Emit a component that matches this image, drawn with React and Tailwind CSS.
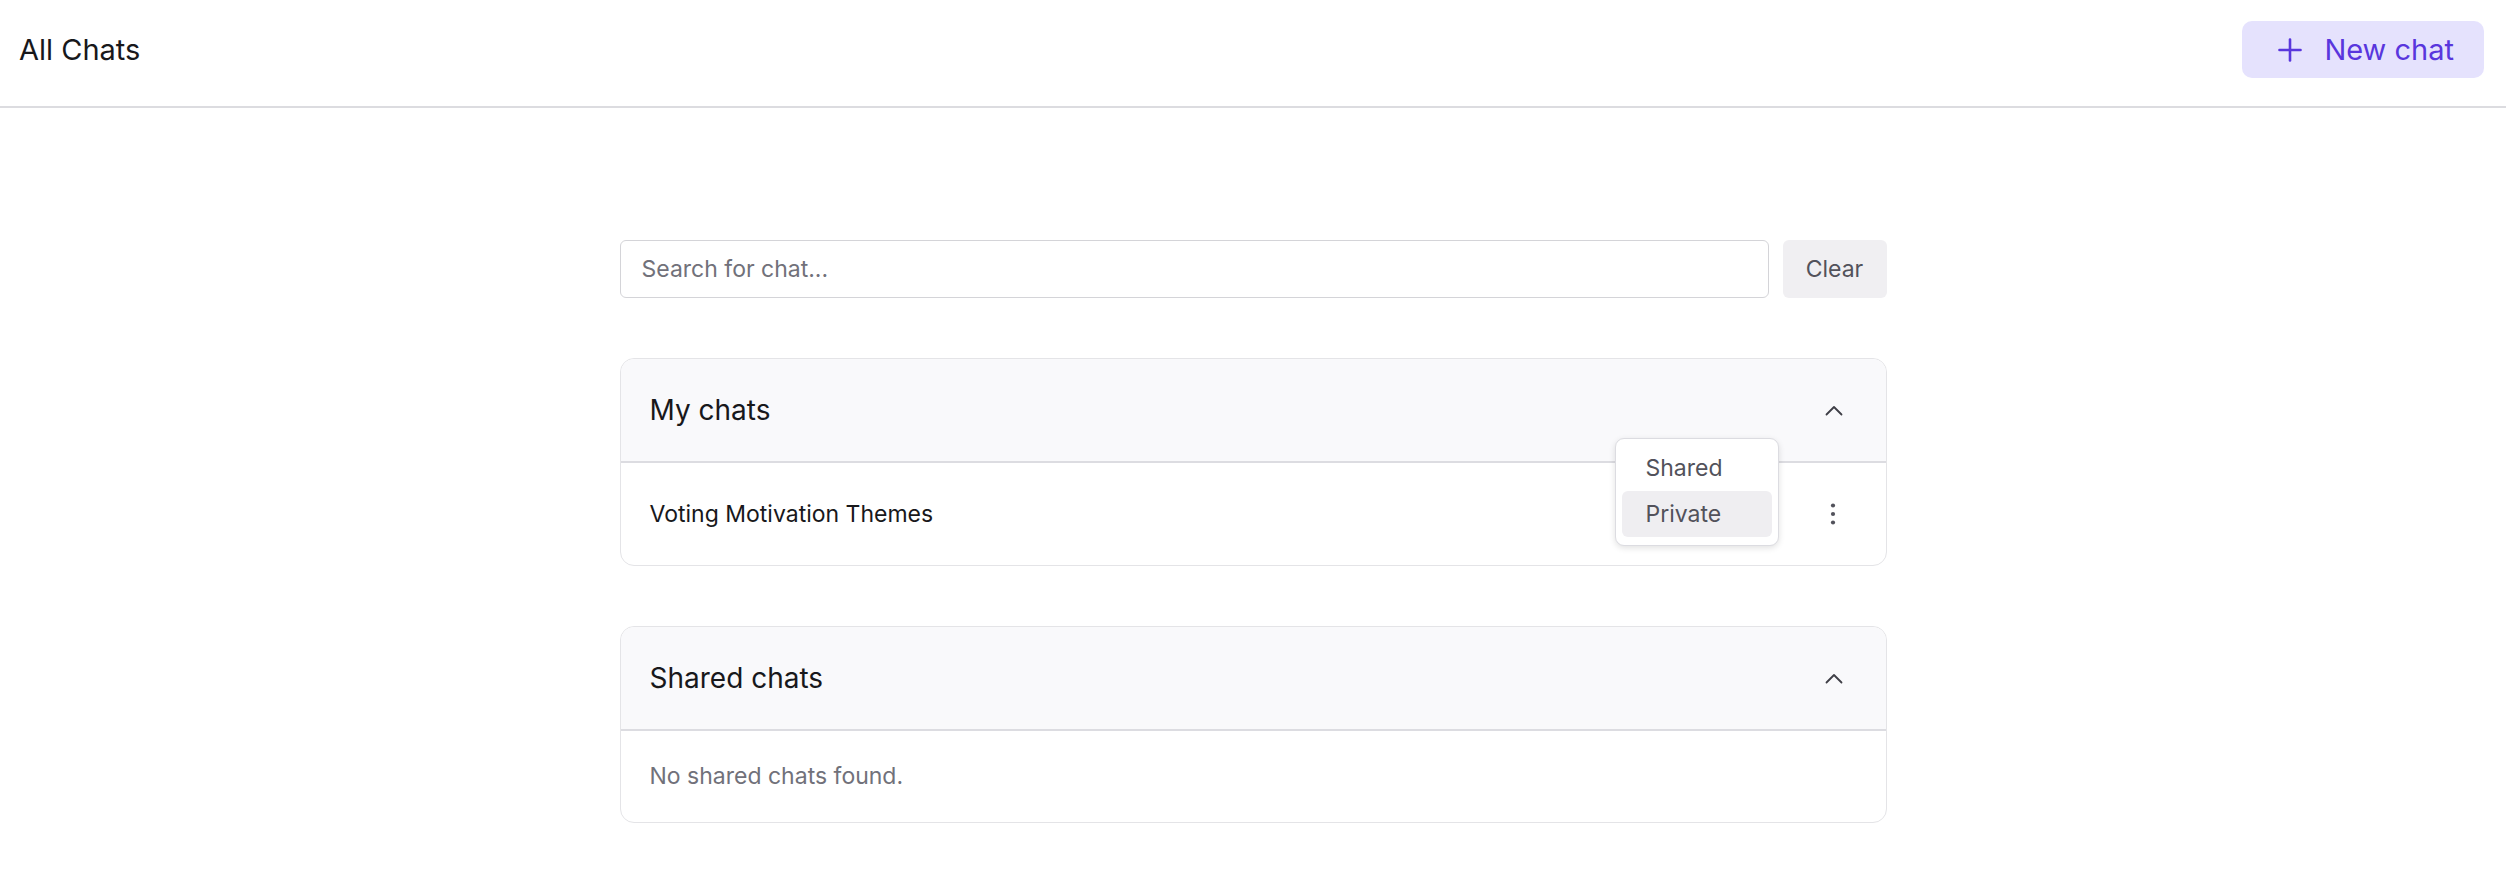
import React, { useState } from 'react'

function ChevronUp() {
    return (
        <svg width="18" height="11" viewBox="0 0 18 11" fill="none">
            <polyline points="1.5,9.5 9,2 16.5,9.5" stroke="#3f3f46" strokeWidth="1.8" strokeLinecap="round" strokeLinejoin="round" />
        </svg>
    )
}

function Kebab() {
    return (
        <svg width="8" height="24" viewBox="0 0 8 24" fill="#52525b">
            <circle cx="4" cy="3.5" r="2.1" />
            <circle cx="4" cy="12" r="2.1" />
            <circle cx="4" cy="20.5" r="2.1" />
        </svg>
    )
}

function Section({ title, children, bodyClass }) {
    return (
        <div className="border border-[#e4e4e7] rounded-[14px] bg-white relative">
            <div className="h-[104px] bg-[#f9f9fb] rounded-t-[14px] flex items-center justify-between pl-[29px] pr-[43px] border-b-2 border-[#dcdce1]">
                <span className="text-[28px] text-[#18181b]">{title}</span>
                <ChevronUp />
            </div>
            <div className={bodyClass}>{children}</div>
        </div>
    )
}

export default function App() {
    const [query, setQuery] = useState('')

    return (
        <div className="min-h-screen bg-white font-['Inter',sans-serif]">
            {/* Top bar */}
            <header className="h-[108px] flex items-start justify-between pt-[21px] pl-[19px] pr-[22px] border-b-2 border-[#dcdce0]">
                <h1 className="h-[57px] flex items-center text-[29px] text-[#18181b]">All Chats</h1>
                <button className="h-[57px] flex items-center gap-[22px] pl-[36px] pr-[30px] rounded-[10px] bg-[#e5e2fd] text-[#5936dd] text-[29px]">
                    <svg width="24" height="24" viewBox="0 0 24 24" fill="none" stroke="#5936dd" strokeWidth="2.6" strokeLinecap="round">
                        <line x1="12" y1="1.5" x2="12" y2="22.5" />
                        <line x1="1.5" y1="12" x2="22.5" y2="12" />
                    </svg>
                    New chat
                </button>
            </header>

            <main className="w-[1267px] mx-auto pt-[132px] pb-10">
                {/* Search */}
                <div className="flex gap-[14px] h-[58px]">
                    <input
                        value={query}
                        onChange={(e) => setQuery(e.target.value)}
                        placeholder="Search for chat..."
                        className="flex-1 h-full border border-[#d4d4d8] rounded-[6px] px-[21px] text-[23px] text-[#18181b] placeholder:text-[#71717a] outline-none"
                    />
                    <button onClick={() => setQuery('')} className="w-[104px] h-full rounded-[6px] bg-[#f0eff2] text-[23px] text-[#52525b]">
                        Clear
                    </button>
                </div>

                {/* My chats */}
                <div className="mt-[60px]">
                    <Section title="My chats" bodyClass="h-[102px] flex items-center justify-between pl-[29px] pr-[49px]">
                        <span className="text-[23px] text-[#18181b]">Voting Motivation Themes</span>
                        <Kebab />
                    </Section>
                    <div className="relative">
                        <div className="absolute left-[995px] top-[-128px] w-[164px] bg-white border border-[#dcdce1] rounded-[9px] shadow-[0_2px_6px_rgba(0,0,0,0.12)] p-[6px] pb-[8px]">
                            <div className="h-[46px] flex items-center px-[24px] text-[23px] text-[#52525b]">Shared</div>
                            <div className="h-[46px] flex items-center px-[24px] text-[23px] text-[#52525b] bg-[#efeef1] rounded-[6px]">Private</div>
                        </div>
                    </div>
                </div>

                {/* Shared chats */}
                <div className="mt-[60px]">
                    <Section title="Shared chats" bodyClass="h-[91px] flex items-center pl-[29px]">
                        <span className="text-[23px] text-[#71717a]">No shared chats found.</span>
                    </Section>
                </div>
            </main>
        </div>
    )
}
